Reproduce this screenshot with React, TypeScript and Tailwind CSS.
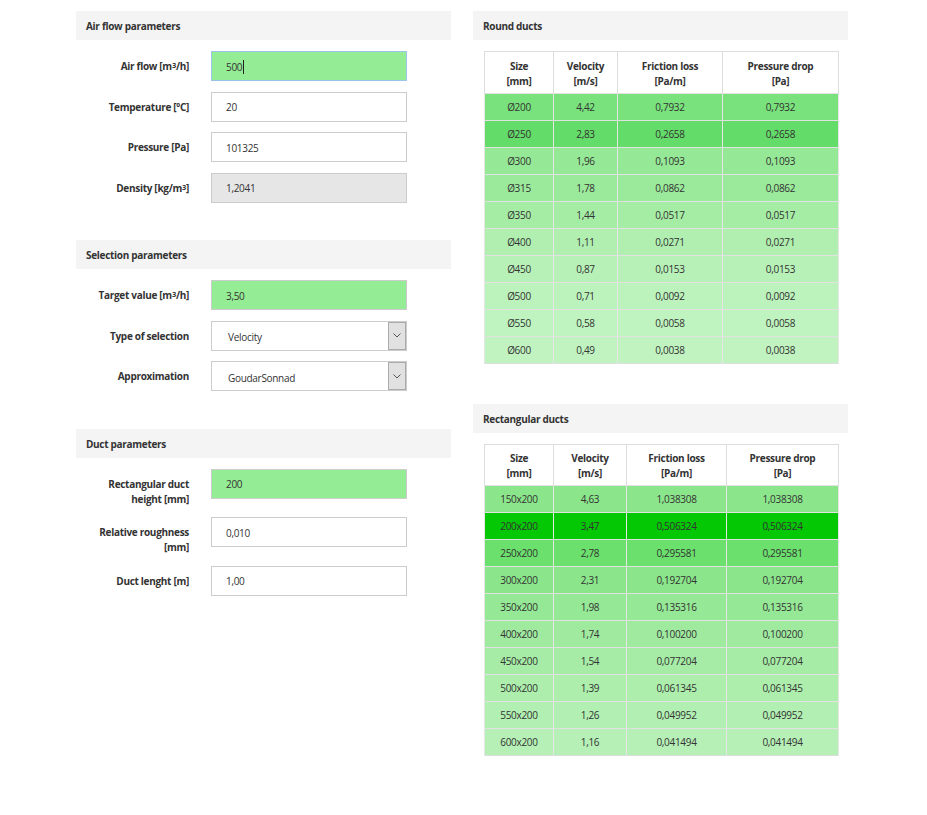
import React from 'react';

type Field = {
  label: React.ReactNode;
  value: string;
  kind?: 'green' | 'focus' | 'gray' | 'select';
};

const Cube = () => <sup className="relative -top-[2px] text-[7.5px] leading-none">3</sup>;

const airFlow: Field[] = [
  { label: <>Air flow [m<Cube />/h]</>, value: '500', kind: 'focus' },
  { label: 'Temperature [ºC]', value: '20' },
  { label: 'Pressure [Pa]', value: '101325' },
  { label: <>Density [kg/m<Cube />]</>, value: '1,2041', kind: 'gray' },
];

const selection: Field[] = [
  { label: <>Target value [m<Cube />/h]</>, value: '3,50', kind: 'green' },
  { label: 'Type of selection', value: 'Velocity', kind: 'select' },
  { label: 'Approximation', value: 'GoudarSonnad', kind: 'select' },
];

const duct: Field[] = [
  { label: 'Rectangular duct height [mm]', value: '200', kind: 'green' },
  { label: 'Relative roughness [mm]', value: '0,010' },
  { label: 'Duct lenght [m]', value: '1,00' },
];

const roundRows = [
  ['Ø200', '4,42', '0,7932', 'bg-[#79e27c]'],
  ['Ø250', '2,83', '0,2658', 'bg-[#64dc69]'],
  ['Ø300', '1,96', '0,1093', 'bg-[#95e895]'],
  ['Ø315', '1,78', '0,0862', 'bg-[#9be99b]'],
  ['Ø350', '1,44', '0,0517', 'bg-[#a5eca5]'],
  ['Ø400', '1,11', '0,0271', 'bg-[#b0efb0]'],
  ['Ø450', '0,87', '0,0153', 'bg-[#b8f1b8]'],
  ['Ø500', '0,71', '0,0092', 'bg-[#bcf2bc]'],
  ['Ø550', '0,58', '0,0058', 'bg-[#bff3bf]'],
  ['Ø600', '0,49', '0,0038', 'bg-[#c1f3c1]'],
];

const rectRows = [
  ['150x200', '4,63', '1,038308', 'bg-[#8be68b]'],
  ['200x200', '3,47', '0,506324', 'bg-[#04c804]'],
  ['250x200', '2,78', '0,295581', 'bg-[#6be06d]'],
  ['300x200', '2,31', '0,192704', 'bg-[#8be68b]'],
  ['350x200', '1,98', '0,135316', 'bg-[#95e895]'],
  ['400x200', '1,74', '0,100200', 'bg-[#a0eaa0]'],
  ['450x200', '1,54', '0,077204', 'bg-[#a6eca6]'],
  ['500x200', '1,39', '0,061345', 'bg-[#adeead]'],
  ['550x200', '1,26', '0,049952', 'bg-[#b2efb2]'],
  ['600x200', '1,16', '0,041494', 'bg-[#b6f0b6]'],
];

function SectionHeader({ title }: { title: string }) {
  return (
    <div className="flex h-[29px] items-center bg-[#f4f4f4] px-[10px] pt-[2px] text-[10px] font-bold text-[#333]">
      {title}
    </div>
  );
}

function Input({ field }: { field: Field }) {
  if (field.kind === 'select') {
    return (
      <div className="flex h-[30px] w-[196px] items-center border border-[#cccccc] bg-white">
        <span className="flex-1 pl-[16px] pt-[4px] text-[10px] text-[#333]">{field.value}</span>
        <span className="flex h-[28px] w-[18px] items-center justify-center border border-[#aaaaaa] bg-[#e1e1e1]">
          <svg width="8" height="5" viewBox="0 0 8 5">
            <path d="M0.5 0.5 L4 4 L7.5 0.5" fill="none" stroke="#555" strokeWidth="1" />
          </svg>
        </span>
      </div>
    );
  }
  const cls =
    field.kind === 'focus'
      ? 'bg-[#94ec94] border-[#9cc3ea]'
      : field.kind === 'green'
        ? 'bg-[#94ec94] border-[#cccccc]'
        : field.kind === 'gray'
          ? 'bg-[#e6e6e6] border-[#cccccc]'
          : 'bg-white border-[#cccccc]';
  return (
    <div className={`flex h-[30px] w-[196px] items-center border pl-[14px] pt-[2px] text-[10px] text-[#333] ${cls}`}>
      {field.value}
      {field.kind === 'focus' && <span className="ml-[1px] h-[14px] w-[1px] bg-[#222]" />}
    </div>
  );
}

function Section({ title, fields }: { title: string; fields: Field[] }) {
  return (
    <div className="mb-[37.5px]">
      <SectionHeader title={title} />
      <div className="mt-[11px] flex flex-col gap-[10.5px]">
        {fields.map((f, i) => (
          <div key={i} className="flex items-start gap-[22px]">
            <div className="w-[113px] pt-[8px] text-right text-[10px] font-bold leading-[15px] text-[#333]">
              {f.label}
            </div>
            <Input field={f} />
          </div>
        ))}
      </div>
    </div>
  );
}

function DuctTable({
  rows,
  widths,
  gap,
  headH,
}: {
  rows: string[][];
  widths: string[];
  gap?: boolean;
  headH: string;
}) {
  const heads = [
    ['Size', '[mm]'],
    ['Velocity', '[m/s]'],
    ['Friction loss', '[Pa/m]'],
    ['Pressure drop', '[Pa]'],
  ];
  return (
    <table className="mx-[11px] mt-[11px] w-[354px] table-fixed border-collapse border border-[#dddddd] text-[10px] text-[#333]">
      <colgroup>
        {widths.map((w, i) => (
          <col key={i} className={w} />
        ))}
      </colgroup>
      <thead>
        <tr className={`${headH} bg-white`}>
          {heads.map((h, i) => (
            <th
              key={i}
              className={`border-[#dddddd] pt-[2px] text-center font-bold leading-[15px] ${
                gap && i === 1 ? 'border-l' : 'border-x'
              }`}
            >
              {h[0]}
              <br />
              {h[1]}
            </th>
          ))}
        </tr>
      </thead>
      <tbody>
        {rows.map((r, i) => (
          <tr key={i} className={`h-[27px] border-t border-[#e2e2e2] ${r[3]}`}>
            {[r[0], r[1], r[2], r[2]].map((c, j) => (
              <td
                key={j}
                className={`pt-[1px] text-center ${gap && j === 1 ? 'border-l' : 'border-x'} border-[#e6e6e6]`}
              >
                {c}
              </td>
            ))}
          </tr>
        ))}
      </tbody>
    </table>
  );
}

export default function App() {
  return (
    <div
      className="min-h-screen bg-white pl-[76px] pt-[11px] tracking-[-0.3px]"
      style={{ fontFamily: '"Open Sans", "Noto Sans", sans-serif' }}
    >
      <div className="flex items-start gap-[22px]">
        {/* Left column: inputs */}
        <div className="w-[375px]">
          <Section title="Air flow parameters" fields={airFlow} />
          <Section title="Selection parameters" fields={selection} />
          <Section title="Duct parameters" fields={duct} />
        </div>

        {/* Right column: results */}
        <div className="w-[375px]">
          <SectionHeader title="Round ducts" />
          <DuctTable
            rows={roundRows}
            widths={['w-[69px]', 'w-[64px]', 'w-[105px]', 'w-[116px]']}
            headH="h-[42px]"
          />
          <div className="mt-[40px]">
            <SectionHeader title="Rectangular ducts" />
            <DuctTable
              rows={rectRows}
              widths={['w-[69px]', 'w-[73px]', 'w-[100px]', 'w-[112px]']}
              headH="h-[41px]"
              gap
            />
          </div>
        </div>
      </div>
    </div>
  );
}
